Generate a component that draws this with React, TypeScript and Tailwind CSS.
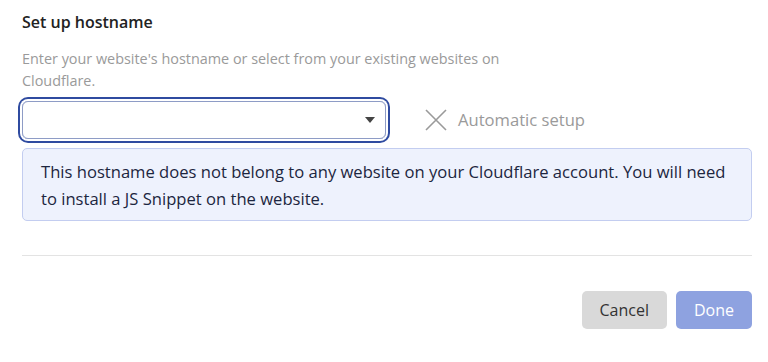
import React from 'react';

export default function App() {
  return (
    <div className="w-[768px] h-[362px] bg-white pl-[22px] pr-[16px] pt-[11px] text-[#333] [font-family:'Open_Sans',sans-serif]">
      <h2 className="text-[16px] font-semibold text-[#222] leading-[22px]">Set up hostname</h2>

      <p className="mt-[15px] w-[520px] text-[14.4px] leading-[22px] text-[#9a9a9a]">
        Enter your website's hostname or select from your existing websites on Cloudflare.
      </p>

      <div className="mt-[9px] flex items-center">
        <div className="w-[364px] h-[38px] rounded-[6px] border border-[#8e9cc6] ring-2 ring-[#2f4ba0] ring-offset-2 flex items-center justify-end pr-[10px]">
          <svg width="10" height="6" viewBox="0 0 10 6">
            <path d="M0 0 L10 0 L5 6 Z" fill="#444" />
          </svg>
        </div>
        <div className="ml-[39px] flex items-center gap-[11px] text-[#9a9a9a]">
          <svg width="22" height="22" viewBox="0 0 22 22" fill="none" stroke="#9a9a9a" strokeWidth="1.6">
            <path d="M1 1 L21 21 M21 1 L1 21" />
          </svg>
          <span className="text-[16.6px]">Automatic setup</span>
        </div>
      </div>

      <div className="mt-[9px] rounded-[5px] border border-[#c3cdf0] bg-[#eef2fd] pl-[18px] pr-[22px] pt-[9px] pb-[8px] text-[16.6px] leading-[27px] text-[#1c2640]">
        This hostname does not belong to any website on your Cloudflare account. You will need to install a JS Snippet on the website.
      </div>

      <div className="mt-[34px] border-t border-[#e3e3e3]" />

      <div className="mt-[35px] flex justify-end gap-[9px]">
        <button className="h-[38px] px-[18px] rounded-[5px] bg-[#d9d9d9] text-[16px] text-[#333]">Cancel</button>
        <button className="h-[38px] px-[18px] rounded-[5px] bg-[#8ea2e0] text-[16px] text-white">Done</button>
      </div>
    </div>
  );
}
